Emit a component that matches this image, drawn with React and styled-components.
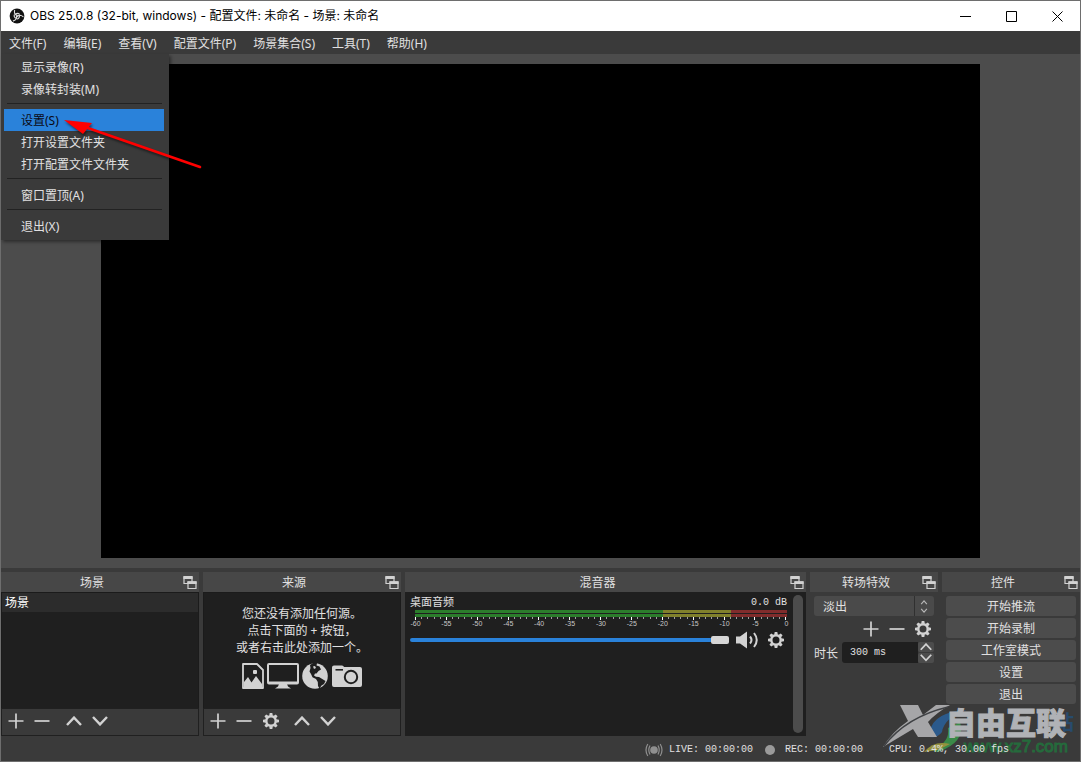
import React from "react";
import styled, { createGlobalStyle } from "styled-components";

const GlobalStyle = createGlobalStyle`
  * {
    box-sizing: border-box;
  }
  body {
    margin: 0;
    background: #3a3a3a;
  }
  button,
  input,
  select {
    font: inherit;
    color: inherit;
    margin: 0;
    padding: 0;
    border: 0;
    background: none;
  }
  svg {
    display: block;
  }
`;

const mono = `"Liberation Mono", "Noto Sans CJK SC", monospace`;

const Window = styled.div`
  display: flex;
  flex-direction: column;
  height: 100vh;
  min-height: 480px;
  position: relative;
  border: 1px solid #6e6e6e;
  background: #3a3a3a;
  color: #e1e0e1;
  font-family: "Noto Sans", "Noto Sans CJK SC", sans-serif;
  font-size: 12px;
  line-height: 16px;
`;

const TitleBar = styled.header`
  display: flex;
  align-items: center;
  height: 30px;
  padding-left: 8px;
  background: #fff;
  color: #000;
`;

const TitleText = styled.h1`
  flex: 1;
  margin: 0 0 0 5px;
  font-family: Inter, "Noto Sans CJK SC", sans-serif;
  font-size: 12px;
  font-weight: normal;
  white-space: nowrap;
`;

const WindowButton = styled.button`
  display: flex;
  align-items: center;
  justify-content: center;
  width: 46px;
  height: 28px;
`;

const MenuBar = styled.nav`
  display: flex;
  position: relative;
  height: 23px;
  background: #3a3a3a;
`;

const MenuButton = styled.button`
  padding: 2px 9px 0 8px;
  white-space: nowrap;
`;

const Menu = styled.div`
  position: absolute;
  z-index: 2;
  top: 100%;
  left: 0;
  width: 168px;
  padding: 2px 5px 3px 3px;
  background: #3a3a3a;
  box-shadow: 2px 2px 3px rgba(0, 0, 0, 0.4);
`;

const MenuItem = styled.button`
  display: block;
  width: 100%;
  height: 22px;
  padding: 2px 0 0 17px;
  text-align: left;
  background: ${(p) => (p.$active ? "#2a82da" : "none")};
  color: ${(p) => (p.$active ? "#0a0a14" : "inherit")};
`;

const Separator = styled.hr`
  height: 1px;
  margin: 3px 2px 5px 3px;
  border: 0;
  background: #222;
`;

const Preview = styled.main`
  display: flex;
  justify-content: center;
  flex: 1;
  min-height: 0;
  padding: 10px;
  background: #4c4c4c;
`;

const Canvas = styled.div`
  height: 100%;
  aspect-ratio: 16 / 9;
  background: #000;
`;

const Docks = styled.div`
  display: grid;
  grid-template-columns: 198fr 198fr 401fr 128fr 138fr;
  gap: 4px;
  padding-top: 4px;
`;

const DockBox = styled.section`
  display: flex;
  flex-direction: column;
  min-width: 0;
  height: 164px;
`;

const DockTitle = styled.div`
  display: flex;
  align-items: center;
  height: 20px;
  padding: 2px 2px 0 0;
  background: #474747;
`;

const DockName = styled.h2`
  flex: 1;
  margin: 0;
  font-size: 12px;
  font-weight: normal;
  text-align: center;
`;

const List = styled.div`
  flex: 1;
  border: 1px solid #1b1b1b;
  border-bottom: 0;
  background: #1f1f1f;
`;

const ListRow = styled.div`
  height: 19px;
  padding-left: 3px;
  line-height: 19px;
  background: #2c2c2c;
  color: #fff;
`;

const Toolbar = styled.div`
  display: flex;
  align-items: center;
  height: 28px;
  padding: 0 0 2px 2px;
  border: 1px solid #202020;
  background: #3a3a3a;
`;

const IconButton = styled.button`
  display: flex;
  align-items: center;
  justify-content: center;
  width: ${(p) => p.$width || 26}px;
  height: 22px;
`;

const Divider = styled.span`
  width: 5px;
`;

const EmptySources = styled.div`
  padding-top: 12px;
  text-align: center;
  line-height: 17px;

  p {
    margin: 0;
  }
`;

const SourceIcons = styled.div`
  display: flex;
  justify-content: center;
  gap: 2px;
  margin-top: 6px;
`;

const Mixer = styled.div`
  display: flex;
  flex: 1;
  background: #1f1f1f;
`;

const Channel = styled.div`
  flex: 1;
  padding: 3px 6px 0 5px;
`;

const ChannelHead = styled.div`
  display: flex;
  justify-content: space-between;
  height: 15px;
  font-family: ${mono};
  font-size: 10px;
  line-height: 15px;

  label {
    font-size: 11px;
    line-height: 17px;
  }
`;

const Meter = styled.div`
  margin-left: 5px;
`;

const MeterBar = styled.div`
  height: 3px;
  margin-bottom: ${(p) => p.$gap || 0}px;
  background: linear-gradient(
    to right,
    #2c7d2c 66.6%,
    #80802c 66.6%,
    #80802c 85%,
    #802c2c 85%
  );
`;

const Ticks = styled.div`
  display: flex;
  justify-content: space-between;
  height: 3px;
`;

const Tick = styled.i`
  width: 1px;
  height: ${(p) => (p.$major ? 3 : 2)}px;
  background: ${(p) => (p.$major ? "#fff" : "#a0a0a0")};
`;

const Scale = styled.div`
  display: flex;
  justify-content: space-between;
  height: 9px;
  color: #c8c8c8;
  font-family: "Liberation Sans", sans-serif;
  font-size: 7px;
  line-height: 8px;

  span {
    display: flex;
    justify-content: center;
    width: 1px;
  }
`;

const VolumeRow = styled.div`
  display: flex;
  align-items: center;
  height: 22px;
`;

const Volume = styled.input`
  appearance: none;
  flex: 1;
  min-width: 0;
  height: 8px;

  &::-webkit-slider-runnable-track {
    height: 4px;
    border-radius: 2px;
    background: #2a82da;
  }
  &::-webkit-slider-thumb {
    appearance: none;
    width: 18px;
    height: 8px;
    margin-top: -2px;
    border-radius: 2px;
    background: #d6d6d6;
  }
`;

const ScrollTrack = styled.div`
  width: 13px;
  padding: 3px 3px 3px 0;
`;

const ScrollThumb = styled.div`
  height: 100%;
  border-radius: 5px;
  background: #4c4c4c;
`;

const Transitions = styled.div`
  padding: 4px 4px 0;
`;

const SelectBox = styled.div`
  display: grid;
  grid-template-columns: 1fr 20px;
  border-radius: 3px;
  background: #4a4a4a;

  select {
    appearance: none;
    grid-area: 1 / 1 / 2 / 3;
    height: 20px;
    padding: 2px 0 0 9px;
  }
  svg {
    grid-area: 1 / 2 / 2 / 3;
    height: 20px;
    border-left: 1px solid #303030;
    pointer-events: none;
  }
`;

const TransitionTools = styled.div`
  display: flex;
  justify-content: flex-end;
  height: 26px;
  align-items: center;
`;

const Duration = styled.div`
  display: flex;
  align-items: center;

  label {
    width: 28px;
    padding-top: 2px;
  }
  input {
    flex: 1;
    min-width: 0;
    height: 21px;
    padding-left: 8px;
    border-radius: 3px 0 0 3px;
    background: #1f1f1f;
    font-family: ${mono};
    font-size: 10px;
  }
`;

const Spinner = styled.div`
  display: flex;
  flex-direction: column;
  gap: 1px;

  button {
    display: flex;
    align-items: center;
    justify-content: center;
    width: 16px;
    height: 10px;
    border-radius: 2px;
    background: #4c4c4c;
  }
`;

const Controls = styled.div`
  display: flex;
  flex-direction: column;
  gap: 2px;
  padding: 4px 4px 0;
`;

const ControlButton = styled.button`
  height: 20px;
  padding-top: 2px;
  border-radius: 3px;
  background: #4c4c4c;
`;

const StatusBar = styled.footer`
  display: flex;
  align-items: center;
  justify-content: flex-end;
  height: 25px;
  padding: 2px 71px 0 0;
  font-family: ${mono};
  font-size: 10px;
  white-space: nowrap;
`;

const Status = styled.span`
  display: flex;
  position: relative;
  z-index: 1;
  align-items: center;
  gap: ${(p) => p.$gap || 0}px;
  margin-left: ${(p) => p.$space || 0}px;
`;

const Arrow = styled.svg`
  position: absolute;
  z-index: 3;
  top: 113px;
  left: 60px;
  pointer-events: none;
  filter: drop-shadow(1px 2px 1px rgba(0, 0, 0, 0.5));
`;

const Watermark = styled.div`
  position: absolute;
  right: 6px;
  bottom: 5px;
  width: 192px;
  height: 54px;
  pointer-events: none;

  svg {
    position: absolute;
    inset: 0;
  }
`;

const MarkName = styled.span`
  position: absolute;
  top: 4px;
  right: 8px;
  color: #b0b2b6;
  font-family: "Noto Sans CJK SC", sans-serif;
  font-size: 30px;
  font-weight: 900;
  line-height: 30px;
  -webkit-text-stroke: 1px #b0b2b6;
`;

const MarkBack = styled.span`
  position: absolute;
  top: 9px;
  right: 0;
  color: #284b6c;
  font-size: 20px;
  font-weight: bold;
  line-height: 24px;
`;

const MarkUrl = styled.span`
  position: absolute;
  right: 6px;
  bottom: 0;
  color: #256a3c;
  font-family: "Liberation Sans", sans-serif;
  font-size: 17px;
  line-height: 18px;
  -webkit-text-stroke: 1px #256a3c;
`;

const light = "#d2d2d2";

const PlusIcon = () => (
  <svg width="16" height="16" viewBox="0 0 16 16">
    <path d="M8 0.5V15.5M0.5 8H15.5" stroke={light} strokeWidth="1.7" />
  </svg>
);

const MinusIcon = () => (
  <svg width="16" height="16" viewBox="0 0 16 16">
    <path d="M0.5 8H15.5" stroke={light} strokeWidth="1.7" />
  </svg>
);

const Chevron = ({ down, width = 16, stroke = 2.4 }) => (
  <svg width={width} height={width * 0.625} viewBox="0 0 16 10">
    <path
      d={down ? "M1 1L8 8.4L15 1" : "M1 9L8 1.6L15 9"}
      fill="none"
      stroke={light}
      strokeWidth={stroke}
    />
  </svg>
);

const GearIcon = () => (
  <svg width="16" height="16" viewBox="0 0 16 16">
    <circle cx="8" cy="8" r="4.7" fill="none" stroke={light} strokeWidth="2.4" />
    {[0, 45, 90, 135, 180, 225, 270, 315].map((angle) => (
      <path
        key={angle}
        d="M6.2 2.8L6.7 0H9.3L9.8 2.8Z"
        fill={light}
        transform={`rotate(${angle} 8 8)`}
      />
    ))}
  </svg>
);

const FloatIcon = () => (
  <svg width="14" height="14" viewBox="0 0 14 14">
    <path d="M1 1H9V7.5H1Z" fill="#474747" stroke={light} strokeWidth="1.2" />
    <path d="M0.4 0H9.6V3H0.4Z" fill={light} />
    <path d="M5 6H13V12.5H5Z" fill="#474747" stroke={light} strokeWidth="1.2" />
    <path d="M4.4 5.2H13.6V8H4.4Z" fill={light} />
  </svg>
);

const ImageIcon = () => (
  <svg width="24" height="28" viewBox="0 0 24 28">
    <path
      d="M2 2H16L22 8V26H2Z"
      fill="none"
      stroke={light}
      strokeWidth="1.8"
      strokeLinejoin="round"
    />
    <path d="M3 25V20L7 15L10.5 20.5L15 14L21 22V25Z" fill={light} />
    <rect x="12" y="8" width="4" height="4" rx="1" fill={light} />
  </svg>
);

const MonitorIcon = () => (
  <svg width="32" height="28" viewBox="0 0 32 28">
    <rect x="1" y="2" width="30" height="19.5" rx="1" fill="none" stroke={light} strokeWidth="2" />
    <path d="M1 19.5H31V22H1ZM12 22H20L21 24.5L24 26.5H8L11 24.5Z" fill={light} />
  </svg>
);

const GlobeIcon = () => (
  <svg width="28" height="28" viewBox="0 0 28 28">
    <circle cx="14" cy="14" r="12.8" fill={light} />
    <path
      d="M9 3L12 1L16 1L15.5 3.5L18.5 4.5L20 7.5L17.5 9L15.5 11.5L14 11.5L13 13.5L15 14.8L18 15L24.5 19L23 22L20.5 23.5L18.5 26.5L17 24L16.8 20L15 17L11.5 15.2L10 12L8.5 9.5L9.5 6Z"
      fill="#1f1f1f"
    />
    <path d="M12 4.5L14 4L15 6L13 7Z" fill={light} />
  </svg>
);

const CameraIcon = () => (
  <svg width="32" height="28" viewBox="0 0 32 28">
    <path
      d="M3 3.5H11Q12.5 3.5 13 5H29Q31 5 31 7V23Q31 25 29 25H3Q1 25 1 23V5.5Q1 3.5 3 3.5Z"
      fill={light}
    />
    <path d="M4.5 7.8H12" stroke="#1f1f1f" strokeWidth="1.6" />
    <circle cx="20" cy="15" r="6.2" fill="none" stroke="#1f1f1f" strokeWidth="2" />
  </svg>
);

const SpeakerIcon = () => (
  <svg width="24" height="18" viewBox="0 0 24 18">
    <path d="M1 5.5H5L12 0.6V17.4L5 12.5H1Z" fill={light} />
    <path
      d="M15 5.5Q18 9 15 12.5M19 2Q24.5 9 19 16"
      fill="none"
      stroke={light}
      strokeWidth="2"
    />
  </svg>
);

const LiveIcon = () => (
  <svg width="18" height="14" viewBox="0 0 18 14">
    <circle cx="9" cy="7" r="3.8" fill="#8f8f8f" />
    <path
      d="M5 2.5Q2.6 7 5 11.5M2.8 1Q-0.8 7 2.8 13M13 2.5Q15.4 7 13 11.5M15.2 1Q18.8 7 15.2 13"
      fill="none"
      stroke="#8f8f8f"
      strokeWidth="1.2"
    />
  </svg>
);

const RecordIcon = () => (
  <svg width="10" height="10" viewBox="0 0 10 10">
    <circle cx="5" cy="5" r="5" fill="#9a9a9a" />
  </svg>
);

const ObsLogo = () => (
  <svg width="16" height="16" viewBox="0 0 16 16">
    <circle cx="8" cy="8" r="7.4" fill="#111" />
    {[0, 120, 240].map((angle) => (
      <path
        key={angle}
        d="M8.4 7.6Q4.6 6.4 5.6 2.4M6.4 6Q8.8 4.6 10.4 6.2"
        fill="none"
        stroke="#dcdcdc"
        strokeWidth="1.1"
        strokeLinecap="round"
        transform={`rotate(${angle} 8 8)`}
      />
    ))}
  </svg>
);

const Dock = ({ name, children }) => (
  <DockBox>
    <DockTitle>
      <DockName>{name}</DockName>
      <button aria-label={`${name} 浮动`}>
        <FloatIcon />
      </button>
    </DockTitle>
    {children}
  </DockBox>
);

const ListTools = ({ withGear }) => (
  <Toolbar>
    <IconButton aria-label="添加" $width={24}>
      <PlusIcon />
    </IconButton>
    <IconButton aria-label="移除" $width={28}>
      <MinusIcon />
    </IconButton>
    {withGear && (
      <IconButton aria-label="属性">
        <GearIcon />
      </IconButton>
    )}
    <Divider />
    <IconButton aria-label="上移">
      <Chevron />
    </IconButton>
    <IconButton aria-label="下移">
      <Chevron down />
    </IconButton>
  </Toolbar>
);

const menus = [
  "文件(F)",
  "编辑(E)",
  "查看(V)",
  "配置文件(P)",
  "场景集合(S)",
  "工具(T)",
  "帮助(H)",
];

const fileMenu = [
  ["显示录像(R)", "录像转封装(M)"],
  ["设置(S)", "打开设置文件夹", "打开配置文件文件夹"],
  ["窗口置顶(A)"],
  ["退出(X)"],
];

const controls = ["开始推流", "开始录制", "工作室模式", "设置", "退出"];

const ticks = Array.from({ length: 61 }, (_, i) => i);
const levels = [-60, -55, -50, -45, -40, -35, -30, -25, -20, -15, -10, -5, 0];

const App = () => {
  return (
    <Window>
      <GlobalStyle />
      <TitleBar>
        <ObsLogo />
        <TitleText>
          OBS 25.0.8 (32-bit, windows) - 配置文件: 未命名 - 场景: 未命名
        </TitleText>
        <WindowButton aria-label="最小化">
          <svg width="11" height="11" viewBox="0 0 11 11">
            <path d="M0 5.5H11" stroke="#000" />
          </svg>
        </WindowButton>
        <WindowButton aria-label="最大化">
          <svg width="11" height="11" viewBox="0 0 11 11">
            <path d="M0.5 0.5H10.5V10.5H0.5Z" fill="none" stroke="#000" />
          </svg>
        </WindowButton>
        <WindowButton aria-label="关闭">
          <svg width="11" height="11" viewBox="0 0 11 11">
            <path d="M0.5 0.5L10.5 10.5M10.5 0.5L0.5 10.5" stroke="#000" />
          </svg>
        </WindowButton>
      </TitleBar>
      <MenuBar>
        {menus.map((menu) => (
          <MenuButton key={menu}>{menu}</MenuButton>
        ))}
        <Menu>
          {fileMenu.map((group, i) => (
            <React.Fragment key={i}>
              {i > 0 && <Separator />}
              {group.map((item) => (
                <MenuItem key={item} $active={item === "设置(S)"}>
                  {item}
                </MenuItem>
              ))}
            </React.Fragment>
          ))}
        </Menu>
      </MenuBar>
      <Preview>
        <Canvas />
      </Preview>
      <Docks>
        <Dock name="场景">
          <List>
            <ListRow>场景</ListRow>
          </List>
          <ListTools />
        </Dock>
        <Dock name="来源">
          <List>
            <EmptySources>
              <p>您还没有添加任何源。</p>
              <p>点击下面的 + 按钮，</p>
              <p>或者右击此处添加一个。</p>
              <SourceIcons>
                <ImageIcon />
                <MonitorIcon />
                <GlobeIcon />
                <CameraIcon />
              </SourceIcons>
            </EmptySources>
          </List>
          <ListTools withGear />
        </Dock>
        <Dock name="混音器">
          <Mixer>
            <Channel>
              <ChannelHead>
                <label htmlFor="volume">桌面音频</label>
                <span>0.0 dB</span>
              </ChannelHead>
              <Meter>
                <MeterBar $gap={1} />
                <MeterBar />
                <Ticks>
                  {ticks.map((tick) => (
                    <Tick key={tick} $major={tick % 5 === 0} />
                  ))}
                </Ticks>
                <Scale>
                  {levels.map((level) => (
                    <span key={level}>{level}</span>
                  ))}
                </Scale>
              </Meter>
              <VolumeRow>
                <Volume id="volume" type="range" min="0" max="100" defaultValue="100" />
                <IconButton aria-label="静音" $width={36}>
                  <SpeakerIcon />
                </IconButton>
                <IconButton aria-label="音频设置" $width={22}>
                  <GearIcon />
                </IconButton>
              </VolumeRow>
            </Channel>
            <ScrollTrack>
              <ScrollThumb />
            </ScrollTrack>
          </Mixer>
        </Dock>
        <Dock name="转场特效">
          <Transitions>
            <SelectBox>
              <select aria-label="转场特效">
                <option>淡出</option>
              </select>
              <svg width="20" height="20" viewBox="0 0 20 20">
                <path
                  d="M6.5 8L9.5 4.5L12.5 8M6.5 13L9.5 16.5L12.5 13"
                  fill="none"
                  stroke="#b8b8b8"
                  strokeWidth="1.2"
                />
              </svg>
            </SelectBox>
            <TransitionTools>
              <IconButton aria-label="添加" $width={22}>
                <PlusIcon />
              </IconButton>
              <IconButton aria-label="移除" $width={30}>
                <MinusIcon />
              </IconButton>
              <IconButton aria-label="属性" $width={22}>
                <GearIcon />
              </IconButton>
            </TransitionTools>
            <Duration>
              <label htmlFor="duration">时长</label>
              <input id="duration" defaultValue="300 ms" />
              <Spinner>
                <button aria-label="增加">
                  <Chevron width={12} stroke={2.4} />
                </button>
                <button aria-label="减少">
                  <Chevron down width={12} stroke={2.4} />
                </button>
              </Spinner>
            </Duration>
          </Transitions>
        </Dock>
        <Dock name="控件">
          <Controls>
            {controls.map((control) => (
              <ControlButton key={control}>{control}</ControlButton>
            ))}
          </Controls>
        </Dock>
      </Docks>
      <Watermark>
        <svg width="192" height="54" viewBox="0 0 192 54">
          <path d="M48 29Q52 10 84 8Q62 16 60 30Q54 38 44 34Z" fill="#2b5a8c" />
          <path d="M78 20Q84 40 56 50Q50 50 52 47Q68 40 66 26Z" fill="#3a8a48" />
          <path d="M42 50Q52 38 68 42L56 48Z" fill="#94923e" />
          <path
            d="M18 3H36L41 13L54 3H68Q54 11 46 20L55 35H36L31 27Q16 36 1 45Q10 30 26 19Z"
            fill="#a6a6a8"
          />
          <path d="M2 44Q24 15 66 5" fill="none" stroke="#3f4144" strokeWidth="1.5" />
        </svg>
        <MarkBack>站</MarkBack>
        <MarkName>自由互联</MarkName>
        <MarkUrl>www.xz7.com</MarkUrl>
      </Watermark>
      <StatusBar>
        <Status $gap={6}>
          <LiveIcon />
          LIVE: 00:00:00
        </Status>
        <Status $gap={10} $space={12}>
          <RecordIcon />
          REC: 00:00:00
        </Status>
        <Status $space={26}>CPU: 0.4%, 30.00 fps</Status>
      </StatusBar>
      <Arrow width="145" height="58" viewBox="0 0 145 58">
        <path d="M24 13L139 53" stroke="#f00" strokeWidth="2.6" strokeLinecap="round" />
        <path d="M3 6L31 9L27 14L22 20Z" fill="#f00" />
      </Arrow>
    </Window>
  );
};

export default App;
